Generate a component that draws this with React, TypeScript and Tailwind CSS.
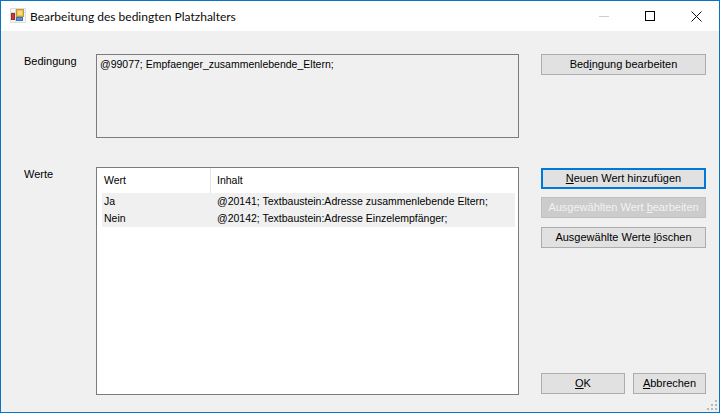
import React from "react";

const font = { fontFamily: '"Liberation Sans", Arial, sans-serif' };

function DlgButton({ children, className = "" }: { children: React.ReactNode; className?: string }) {
  return (
    <div className={"h-[21px] flex items-center justify-center border border-[#adadad] bg-[#e1e1e1] text-[11px] text-black " + className}>
      {children}
    </div>
  );
}

function AppIcon() {
  return (
    <svg width="16" height="16" viewBox="0 0 16 16">
      <path d="M0.5 0.5H15.5V14.5H0.5Z M5.5 0.5V14.5 M0.5 4.5H15.5" fill="#f7f7f7" stroke="#dddddd" />
      <rect x="6.5" y="1.5" width="7" height="7" fill="#f0c244" stroke="#c09a38" />
      <rect x="8" y="3" width="4" height="4" fill="#f8dd80" />
      <rect x="1.5" y="5.5" width="3" height="6" fill="#d23a2c" stroke="#9a2c24" />
      <rect x="6.5" y="9.5" width="6" height="3" fill="#5a8fdc" stroke="#3f70b8" />
    </svg>
  );
}

function SizeGrip() {
  return (
    <svg width="12" height="12" viewBox="0 0 12 12" className="absolute right-0 bottom-0" fill="#b8b8b8">
      <rect x="8" y="0" width="2" height="2" />
      <rect x="4" y="4" width="2" height="2" />
      <rect x="8" y="4" width="2" height="2" />
      <rect x="0" y="8" width="2" height="2" />
      <rect x="4" y="8" width="2" height="2" />
      <rect x="8" y="8" width="2" height="2" />
    </svg>
  );
}

export default function App() {
  return (
    <div style={font} className="relative w-[720px] h-[413px] flex flex-col bg-[#f0f0f0] border-x border-b border-[#0a74c4] overflow-hidden text-[10.5px] text-black">
      <header className="h-[31px] shrink-0 bg-white flex items-center border-t border-[#0a74c4]">
        <div className="ml-[9px] mr-[4px]">
          <AppIcon />
        </div>
        <span className="text-[12px] text-[#0b0b0b] pt-px" style={{ fontFamily: "Lato, sans-serif" }}>
          Bearbeitung des bedingten Platzhalters
        </span>
        <div className="ml-auto flex items-center h-full">
          <div className="w-[46px] flex justify-center">
            <div className="w-[10px] h-px bg-[#cccccc]" />
          </div>
          <div className="w-[46px] flex justify-center">
            <div className="w-[10px] h-[10px] border border-black" />
          </div>
          <div className="w-[46px] flex justify-center">
            <svg width="11" height="11" viewBox="0 0 11 11">
              <path d="M0.5 0.5 L10.5 10.5 M10.5 0.5 L0.5 10.5" stroke="#111" strokeWidth="1" fill="none" />
            </svg>
          </div>
        </div>
      </header>

      <main className="flex-1 flex flex-col pt-[23px] pr-[13px] pl-[23px]">
        <section className="flex h-[84px]">
          <div className="w-[72px] text-[11px] -mt-[1px]">Bedingung</div>
          <div className="w-[423px] border border-[#7c7c7c] bg-[#f0f0f0] px-[3px] py-[1px] leading-[16px]">@99077; Empfaenger_zusammenlebende_Eltern;</div>
          <div className="ml-[22px] w-[165px]">
            <DlgButton>
              <span>
                Bed<span className="underline">i</span>ngung bearbeiten
              </span>
            </DlgButton>
          </div>
        </section>

        <section className="flex h-[228px] mt-[29px]">
          <div className="w-[72px] text-[11px] -mt-[1px]">Werte</div>
          <div className="w-[423px] border border-[#7c7c7c] bg-white pl-[5px] pr-[3px]">
            <div className="flex h-[25px] items-center">
              <div className="w-[109px] h-full flex items-center pl-[2px] border-r border-[#e5e5e5]">Wert</div>
              <div className="pl-[6px]">Inhalt</div>
            </div>
            <div className="flex h-[17px] items-center bg-[#f0f0f0]">
              <div className="w-[109px] pl-[2px]">Ja</div>
              <div className="pl-[6px]">@20141; Textbaustein:Adresse zusammenlebende Eltern;</div>
            </div>
            <div className="flex h-[17px] items-center bg-[#f0f0f0]">
              <div className="w-[109px] pl-[2px]">Nein</div>
              <div className="pl-[6px]">@20142; Textbaustein:Adresse Einzelempfänger;</div>
            </div>
          </div>
          <div className="ml-[22px] w-[165px] flex flex-col pt-px">
            <DlgButton className="!border-2 !border-[#0078d7]">
              <span>
                <span className="underline">N</span>euen Wert hinzufügen
              </span>
            </DlgButton>
            <DlgButton className="mt-[8px] !bg-[#cccccc] !border-[#bfbfbf] !text-[#f2f2f2]">
              <span>
                Ausgewählten Wert <span className="underline">b</span>earbeiten
              </span>
            </DlgButton>
            <DlgButton className="mt-[9px]">
              <span>
                Ausgewählte Werte <span className="underline">l</span>öschen
              </span>
            </DlgButton>
            <div className="mt-auto mb-[1px] flex justify-between">
              <DlgButton className="w-[84px]">
                <span>
                  <span className="underline">O</span>K
                </span>
              </DlgButton>
              <DlgButton className="w-[73px]">
                <span>
                  <span className="underline">A</span>bbrechen
                </span>
              </DlgButton>
            </div>
          </div>
        </section>
      </main>
      <SizeGrip />
    </div>
  );
}
